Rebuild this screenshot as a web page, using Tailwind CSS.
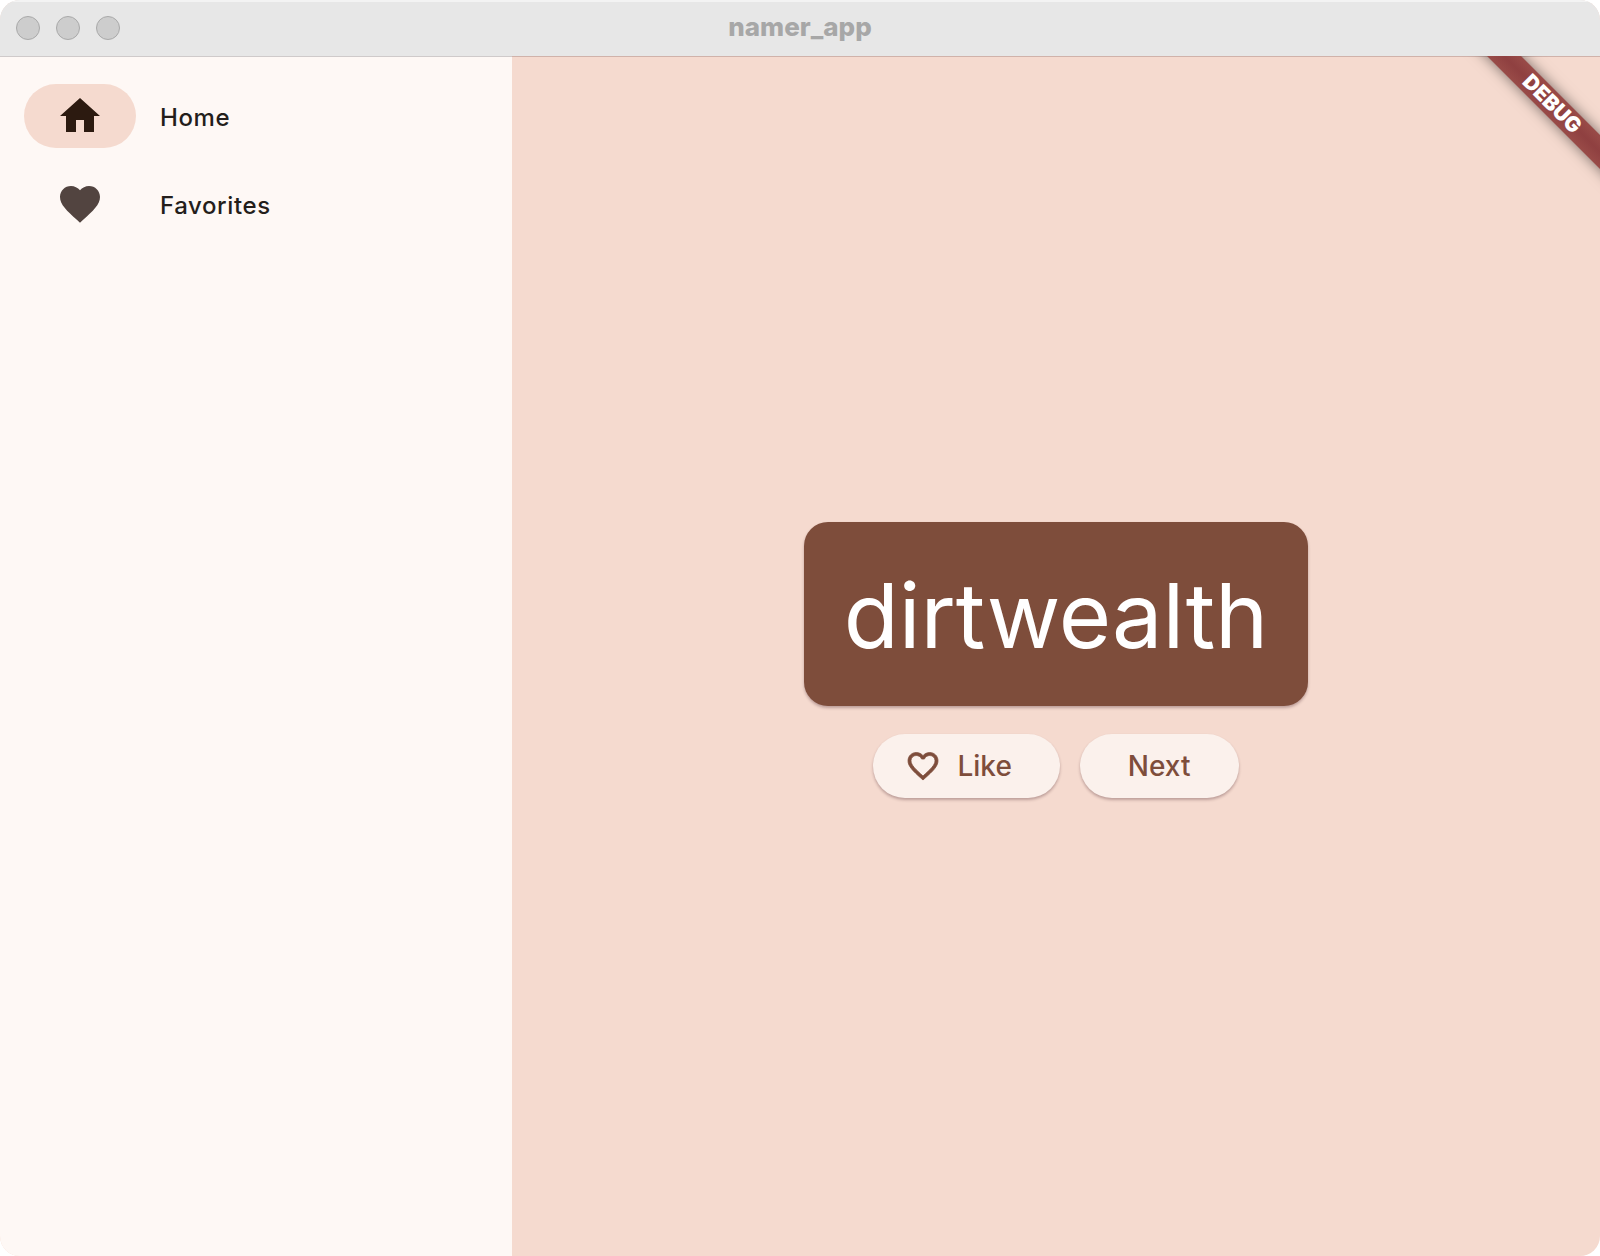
<!DOCTYPE html>
<html lang="en">
<head>
<meta charset="utf-8">
<meta name="viewport" content="width=device-width, initial-scale=1">
<title>namer_app</title>
<script src="https://cdn.jsdelivr.net/npm/@tailwindcss/browser@4"></script>
</head>
<body class="bg-white font-['Inter',sans-serif]">
<div class="flex min-h-screen flex-col overflow-hidden rounded-[20px] bg-[#f5dacf]">
  <header class="grid h-14 shrink-0 grid-cols-[1fr_auto_1fr] items-center bg-[#e7e7e7] px-4 shadow-[inset_0_2px_0_#f3f3f3]">
    <div class="flex gap-4">
      <button type="button" aria-label="Close" class="size-6 rounded-full border border-[#a9a9a9] bg-[#cdcdcd]"></button>
      <button type="button" aria-label="Minimize" class="size-6 rounded-full border border-[#a9a9a9] bg-[#cdcdcd]"></button>
      <button type="button" aria-label="Zoom" class="size-6 rounded-full border border-[#a9a9a9] bg-[#cdcdcd]"></button>
    </div>
    <h1 class="pb-0.5 text-[26px] leading-8 font-extrabold text-[#a7a7a7]">namer_app</h1>
  </header>

  <div class="relative flex grow">
    <nav class="w-[32%] shrink-0 border-t border-[#cfcaca] bg-[#fef8f5] px-6 pt-[27px]">
      <ul class="flex flex-col gap-6">
        <li>
          <a href="#home" aria-current="page" class="flex items-center gap-6 text-2xl font-medium tracking-wide text-[#241e1b]">
            <span class="flex h-16 w-28 items-center justify-center rounded-full bg-[#f5dacf]">
              <svg viewBox="0 0 24 24" class="size-12 fill-[#2c1a10]" aria-hidden="true"><path d="M10 20v-6h4v6h5v-8h3L12 3 2 12h3v8z"/></svg>
            </span>
            <span class="pt-1">Home</span>
          </a>
        </li>
        <li>
          <a href="#favorites" class="flex items-center gap-6 text-2xl font-medium tracking-wide text-[#241e1b]">
            <span class="flex h-16 w-28 items-center justify-center rounded-full">
              <svg viewBox="0 0 24 24" class="size-12 fill-[#524440]" aria-hidden="true"><path d="M12 21.35l-1.45-1.32C5.4 15.36 2 12.28 2 8.5 2 5.42 4.42 3 7.5 3c1.74 0 3.41.81 4.5 2.09C13.09 3.81 14.76 3 16.5 3 19.58 3 22 5.42 22 8.5c0 3.78-3.4 6.86-8.55 11.54L12 21.35z"/></svg>
            </span>
            <span class="pt-1">Favorites</span>
          </a>
        </li>
      </ul>
    </nav>

    <main class="flex grow flex-col items-center justify-center gap-7 border-t border-[#d0b2aa] pt-[7px]">
      <div class="rounded-3xl bg-[#7e4d3b] px-10 py-10 shadow-[0_2px_3px_rgba(60,20,30,0.3)]">
        <p class="pt-1 text-[90px] leading-[100px] text-white">dirtwealth</p>
      </div>
      <div class="flex gap-5">
        <button type="button" class="flex h-16 items-center gap-4 rounded-full bg-[#fbf1ec] pr-12 pl-8 text-[28px] leading-10 font-medium text-[#7e4d3b] shadow-[0_2px_3px_rgba(60,20,30,0.3)]">
          <svg viewBox="0 0 24 24" class="size-9 fill-current stroke-current stroke-[0.5]" aria-hidden="true"><path d="M16.5 3c-1.74 0-3.41.81-4.5 2.09C10.91 3.81 9.24 3 7.5 3 4.42 3 2 5.42 2 8.5c0 3.78 3.4 6.86 8.55 11.54L12 21.35l1.45-1.32C18.6 15.36 22 12.28 22 8.5 22 5.42 19.58 3 16.5 3zm-4.4 15.55l-.1.1-.1-.1C7.14 14.24 4 11.39 4 8.5 4 6.5 5.5 5 7.5 5c1.54 0 3.04.99 3.57 2.36h1.87C13.46 5.99 14.96 5 16.5 5c2 0 3.5 1.5 3.5 3.5 0 2.89-3.14 5.74-7.9 10.05z"/></svg>
          Like
        </button>
        <button type="button" class="h-16 rounded-full bg-[#fbf1ec] px-12 text-[28px] leading-10 font-medium text-[#7e4d3b] shadow-[0_2px_3px_rgba(60,20,30,0.3)]">Next</button>
      </div>
    </main>

    <!-- Diagonal debug ribbon in the corner of the content area -->
    <div class="pointer-events-none absolute top-0 right-0 size-40 overflow-hidden">
      <div class="absolute top-9 -left-2 flex h-6 w-60 rotate-45 items-center justify-center bg-linear-to-b from-[#994b48] via-[#8f4040] to-[#994b48] text-[21px] leading-6 font-black text-white shadow-[0_0_14px_rgba(0,0,0,0.5)]">DEBUG</div>
    </div>
  </div>
</div>
</body>
</html>
